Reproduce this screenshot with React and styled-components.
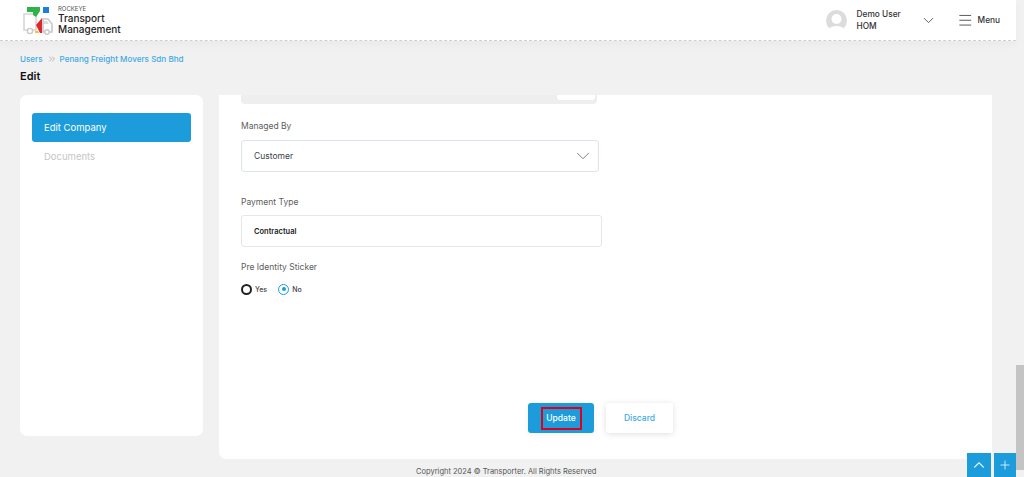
import React from 'react';
import styled, { createGlobalStyle } from 'styled-components';
import { ChevronDown, ChevronUp, ChevronsRight, Menu, Plus } from 'lucide-react';

const GlobalStyle = createGlobalStyle`
  html, body {
    margin: 0;
    height: 100%;
    overflow: hidden;
    background: #f1f1f1;
    font-family: Inter, "Liberation Sans", sans-serif;
  }
  * { box-sizing: border-box; }
`;

const Shell = styled.div`
  display: flex;
  height: 477px;
  width: 1024px;
  overflow: hidden;
`;

const Page = styled.div`
  position: relative;
  width: 1016px;
  flex: none;
`;

const Track = styled.div`
  flex: 1;
  background: #f1f1f1;
  display: flex;
  flex-direction: column;
  justify-content: flex-end;
  padding-bottom: 7px;
`;

const Thumb = styled.div`
  height: 105px;
  background: #c4c4c4;
`;

const Header = styled.header`
  height: 41px;
  background: #fff;
  border-bottom: 1px dashed #cfcfcf;
  box-shadow: 0 4px 8px rgba(0, 0, 0, 0.03);
  display: flex;
  align-items: center;
  padding: 0 16px 0 23px;
`;

const Brand = styled.div`
  display: flex;
  align-items: center;
  gap: 2px;
`;

const BrandText = styled.div`
  display: flex;
  flex-direction: column;
`;

const BrandTop = styled.span`
  font-size: 6px;
  line-height: 8px;
  color: #555;
`;

const BrandName = styled.span`
  font-size: 10px;
  line-height: 11px;
  font-weight: 500;
  color: #222;
`;

const UserArea = styled.div`
  margin-left: auto;
  display: flex;
  align-items: center;
`;

const Avatar = styled.svg`
  width: 21px;
  height: 21px;
  margin-right: 10px;
`;

const UserText = styled.div`
  width: 63.5px;
  font-size: 8.3px;
  line-height: 12px;
  font-weight: 500;
  color: #333;
`;

const MenuLabel = styled.span`
  font-size: 8.3px;
  font-weight: 500;
  color: #333;
  margin-left: 4px;
`;

const MenuIcon = styled.div`
  display: flex;
  color: #555;
  margin-left: ${(p) => p.$gap || 0}px;
`;

const Crumbs = styled.nav`
  display: flex;
  align-items: center;
  margin: 12px 0 0 20px;
  height: 12px;
  font-size: 8.1px;
  font-weight: 500;
  color: #3fa9e4;
`;

const CrumbSep = styled.span`
  display: flex;
  color: #a8a8a8;
  margin: 0 3px 0 4px;
`;

const Title = styled.h1`
  margin: 4px 0 0 20px;
  font-size: 11px;
  line-height: 14px;
  font-weight: 600;
  color: #111;
`;

const Columns = styled.div`
  display: flex;
  align-items: flex-start;
  margin: 12px 24px 0 20px;
  gap: 16px;
`;

const Sidebar = styled.aside`
  width: 183px;
  height: 341px;
  flex: none;
  background: #fff;
  border-radius: 7px;
  padding: 18px 12px;
`;

const SideItem = styled.div`
  height: 29px;
  display: flex;
  align-items: center;
  padding-left: 12px;
  border-radius: 3px;
  font-size: 9.5px;
  background: ${(p) => (p.$active ? '#1c9cdb' : 'transparent')};
  color: ${(p) => (p.$active ? '#fff' : '#c6c6c6')};
`;

const Card = styled.main`
  flex: 1;
  height: 364px;
  background: #fff;
  border-radius: 0 0 7px 7px;
  padding: 0 22px;
  display: flex;
  flex-direction: column;
`;

const ScrolledInput = styled.div`
  width: 356px;
  height: 9px;
  background: #eeeeee;
  border-radius: 0 0 4px 4px;
  display: flex;
  justify-content: flex-end;
  padding-right: 2px;
`;

const ScrolledButton = styled.div`
  width: 38px;
  height: 5px;
  background: #fff;
  border-radius: 0 0 3px 3px;
`;

const Label = styled.label`
  display: block;
  font-size: 8.5px;
  line-height: 12px;
  color: #5d5d5d;
  margin-top: ${(p) => p.$top}px;
`;

const Field = styled.div`
  width: ${(p) => p.$width}px;
  height: 32px;
  margin-top: ${(p) => p.$top}px;
  border: 1px solid ${(p) => p.$line};
  border-radius: 3px;
  display: flex;
  align-items: center;
  justify-content: space-between;
  padding: 0 4px 0 12px;
  font-size: ${(p) => (p.$bold ? 7.5 : 8.5)}px;
  font-weight: ${(p) => (p.$bold ? 600 : 400)};
  color: ${(p) => (p.$bold ? '#222' : '#3b3f4a')};
`;

const RadioRow = styled.div`
  display: flex;
  align-items: center;
  margin-top: 10px;
  height: 12px;
`;

const RadioMark = styled.span`
  width: 11px;
  height: 11px;
  border-radius: 50%;
  border: ${(p) => (p.$on ? '1.5px solid #1c9cdb' : '2px solid #222')};
  display: flex;
  align-items: center;
  justify-content: center;
  &::after {
    content: '';
    width: 4px;
    height: 4px;
    border-radius: 50%;
    background: ${(p) => (p.$on ? '#1c9cdb' : 'transparent')};
  }
`;

const RadioText = styled.span`
  font-size: 7px;
  font-weight: 500;
  color: #444;
  margin: 0 11px 0 3px;
`;

const Actions = styled.div`
  display: flex;
  gap: 12px;
  margin: 108px 0 0 287px;
`;

const Button = styled.button`
  width: ${(p) => p.$width}px;
  height: 30px;
  border: 0;
  border-radius: 3px;
  padding: 0;
  display: flex;
  align-items: center;
  justify-content: center;
  font-family: inherit;
  font-size: 8.5px;
  font-weight: 500;
  background: ${(p) => (p.$primary ? '#1c9cdb' : '#fff')};
  color: ${(p) => (p.$primary ? '#fff' : '#3fa9e4')};
  box-shadow: 0 1px 6px rgba(0, 0, 0, ${(p) => (p.$primary ? 0.06 : 0.13)});
`;

const Highlight = styled.span`
  width: 41px;
  height: 23px;
  display: flex;
  align-items: center;
  justify-content: center;
  border: 2px solid #e0001a;
`;

const Footer = styled.footer`
  margin: 7px 0 0 416px;
  font-size: 7.5px;
  line-height: 12px;
  color: #555;
`;

const Floating = styled.div`
  position: absolute;
  right: 0;
  bottom: 0;
  display: flex;
  gap: 3px;
`;

const FloatButton = styled.div`
  width: ${(p) => p.$width}px;
  height: 24px;
  background: #1c9cdb;
  color: #dff2fb;
  display: flex;
  align-items: center;
  justify-content: center;
`;

const Logo = () => (
  <svg width="33" height="29" viewBox="0 0 33 29">
    <path d="M1 8h12v16H1z" fill="none" stroke="#d6d6d6" strokeWidth="1.6" />
    <path d="M20 13h5l4 5v8h-9z" fill="none" stroke="#c9c9c9" strokeWidth="1.6" />
    <path d="M21 15h3l2 3h-5z" fill="#dcdcdc" />
    <circle cx="7" cy="25" r="2.6" fill="#fff" stroke="#c9c9c9" strokeWidth="1.4" />
    <circle cx="24" cy="26" r="2.2" fill="#fff" stroke="#c9c9c9" strokeWidth="1.4" />
    <path d="M4 1h13v4l-4 6-3-2V6H4z" fill="#2fb24a" />
    <path d="M20 1h6v6h-6z" fill="#1c7fe0" />
    <path d="M19 12l-6 7 4 8h2z" fill="#e0272a" />
    <path d="M12 25h3l1 2h-4z" fill="#f4c430" />
  </svg>
);

const UserPhoto = () => (
  <Avatar viewBox="0 0 21 21">
    <circle cx="10.5" cy="10.5" r="10.5" fill="#dcdcdc" />
    <circle cx="10.5" cy="9" r="5" fill="#fff" />
    <path d="M3 19c2-4 13-4 15 0a10.5 10.5 0 0 1-15 0z" fill="#fff" />
  </Avatar>
);

export default function App() {
  return (
    <Shell>
      <GlobalStyle />
      <Page>
        <Header>
          <Brand>
            <Logo />
            <BrandText>
              <BrandTop>ROCKEYE</BrandTop>
              <BrandName>Transport</BrandName>
              <BrandName>Management</BrandName>
            </BrandText>
          </Brand>
          <UserArea>
            <UserPhoto />
            <UserText>
              Demo User
              <br />
              HOM
            </UserText>
            <MenuIcon>
              <ChevronDown size={17} strokeWidth={1.3} />
            </MenuIcon>
            <MenuIcon $gap={20}>
              <Menu size={16.5} strokeWidth={1.4} />
            </MenuIcon>
            <MenuLabel>Menu</MenuLabel>
          </UserArea>
        </Header>

        <Crumbs>
          Users
          <CrumbSep>
            <ChevronsRight size={10} strokeWidth={2} />
          </CrumbSep>
          Penang Freight Movers Sdn Bhd
        </Crumbs>
        <Title>Edit</Title>

        <Columns>
          <Sidebar>
            <SideItem $active>Edit Company</SideItem>
            <SideItem>Documents</SideItem>
          </Sidebar>
          <Card>
            <ScrolledInput>
              <ScrolledButton />
            </ScrolledInput>
            <Label $top={16}>Managed By</Label>
            <Field $width={358} $top={8} $line="#dde3ec">
              Customer
              <ChevronDown size={22} strokeWidth={1} color="#777" />
            </Field>
            <Label $top={24}>Payment Type</Label>
            <Field $width={361} $top={7} $line="#e6e6e6" $bold>
              Contractual
            </Field>
            <Label $top={14}>Pre Identity Sticker</Label>
            <RadioRow>
              <RadioMark />
              <RadioText>Yes</RadioText>
              <RadioMark $on />
              <RadioText>No</RadioText>
            </RadioRow>
            <Actions>
              <Button $primary $width={66}>
                <Highlight>Update</Highlight>
              </Button>
              <Button $width={67}>Discard</Button>
            </Actions>
          </Card>
        </Columns>

        <Footer>Copyright 2024 © Transporter. All Rights Reserved</Footer>

        <Floating>
          <FloatButton $width={24}>
            <ChevronUp size={18} strokeWidth={1.5} />
          </FloatButton>
          <FloatButton $width={22}>
            <Plus size={14} strokeWidth={1.5} />
          </FloatButton>
        </Floating>
      </Page>
      <Track>
        <Thumb />
      </Track>
    </Shell>
  );
}
